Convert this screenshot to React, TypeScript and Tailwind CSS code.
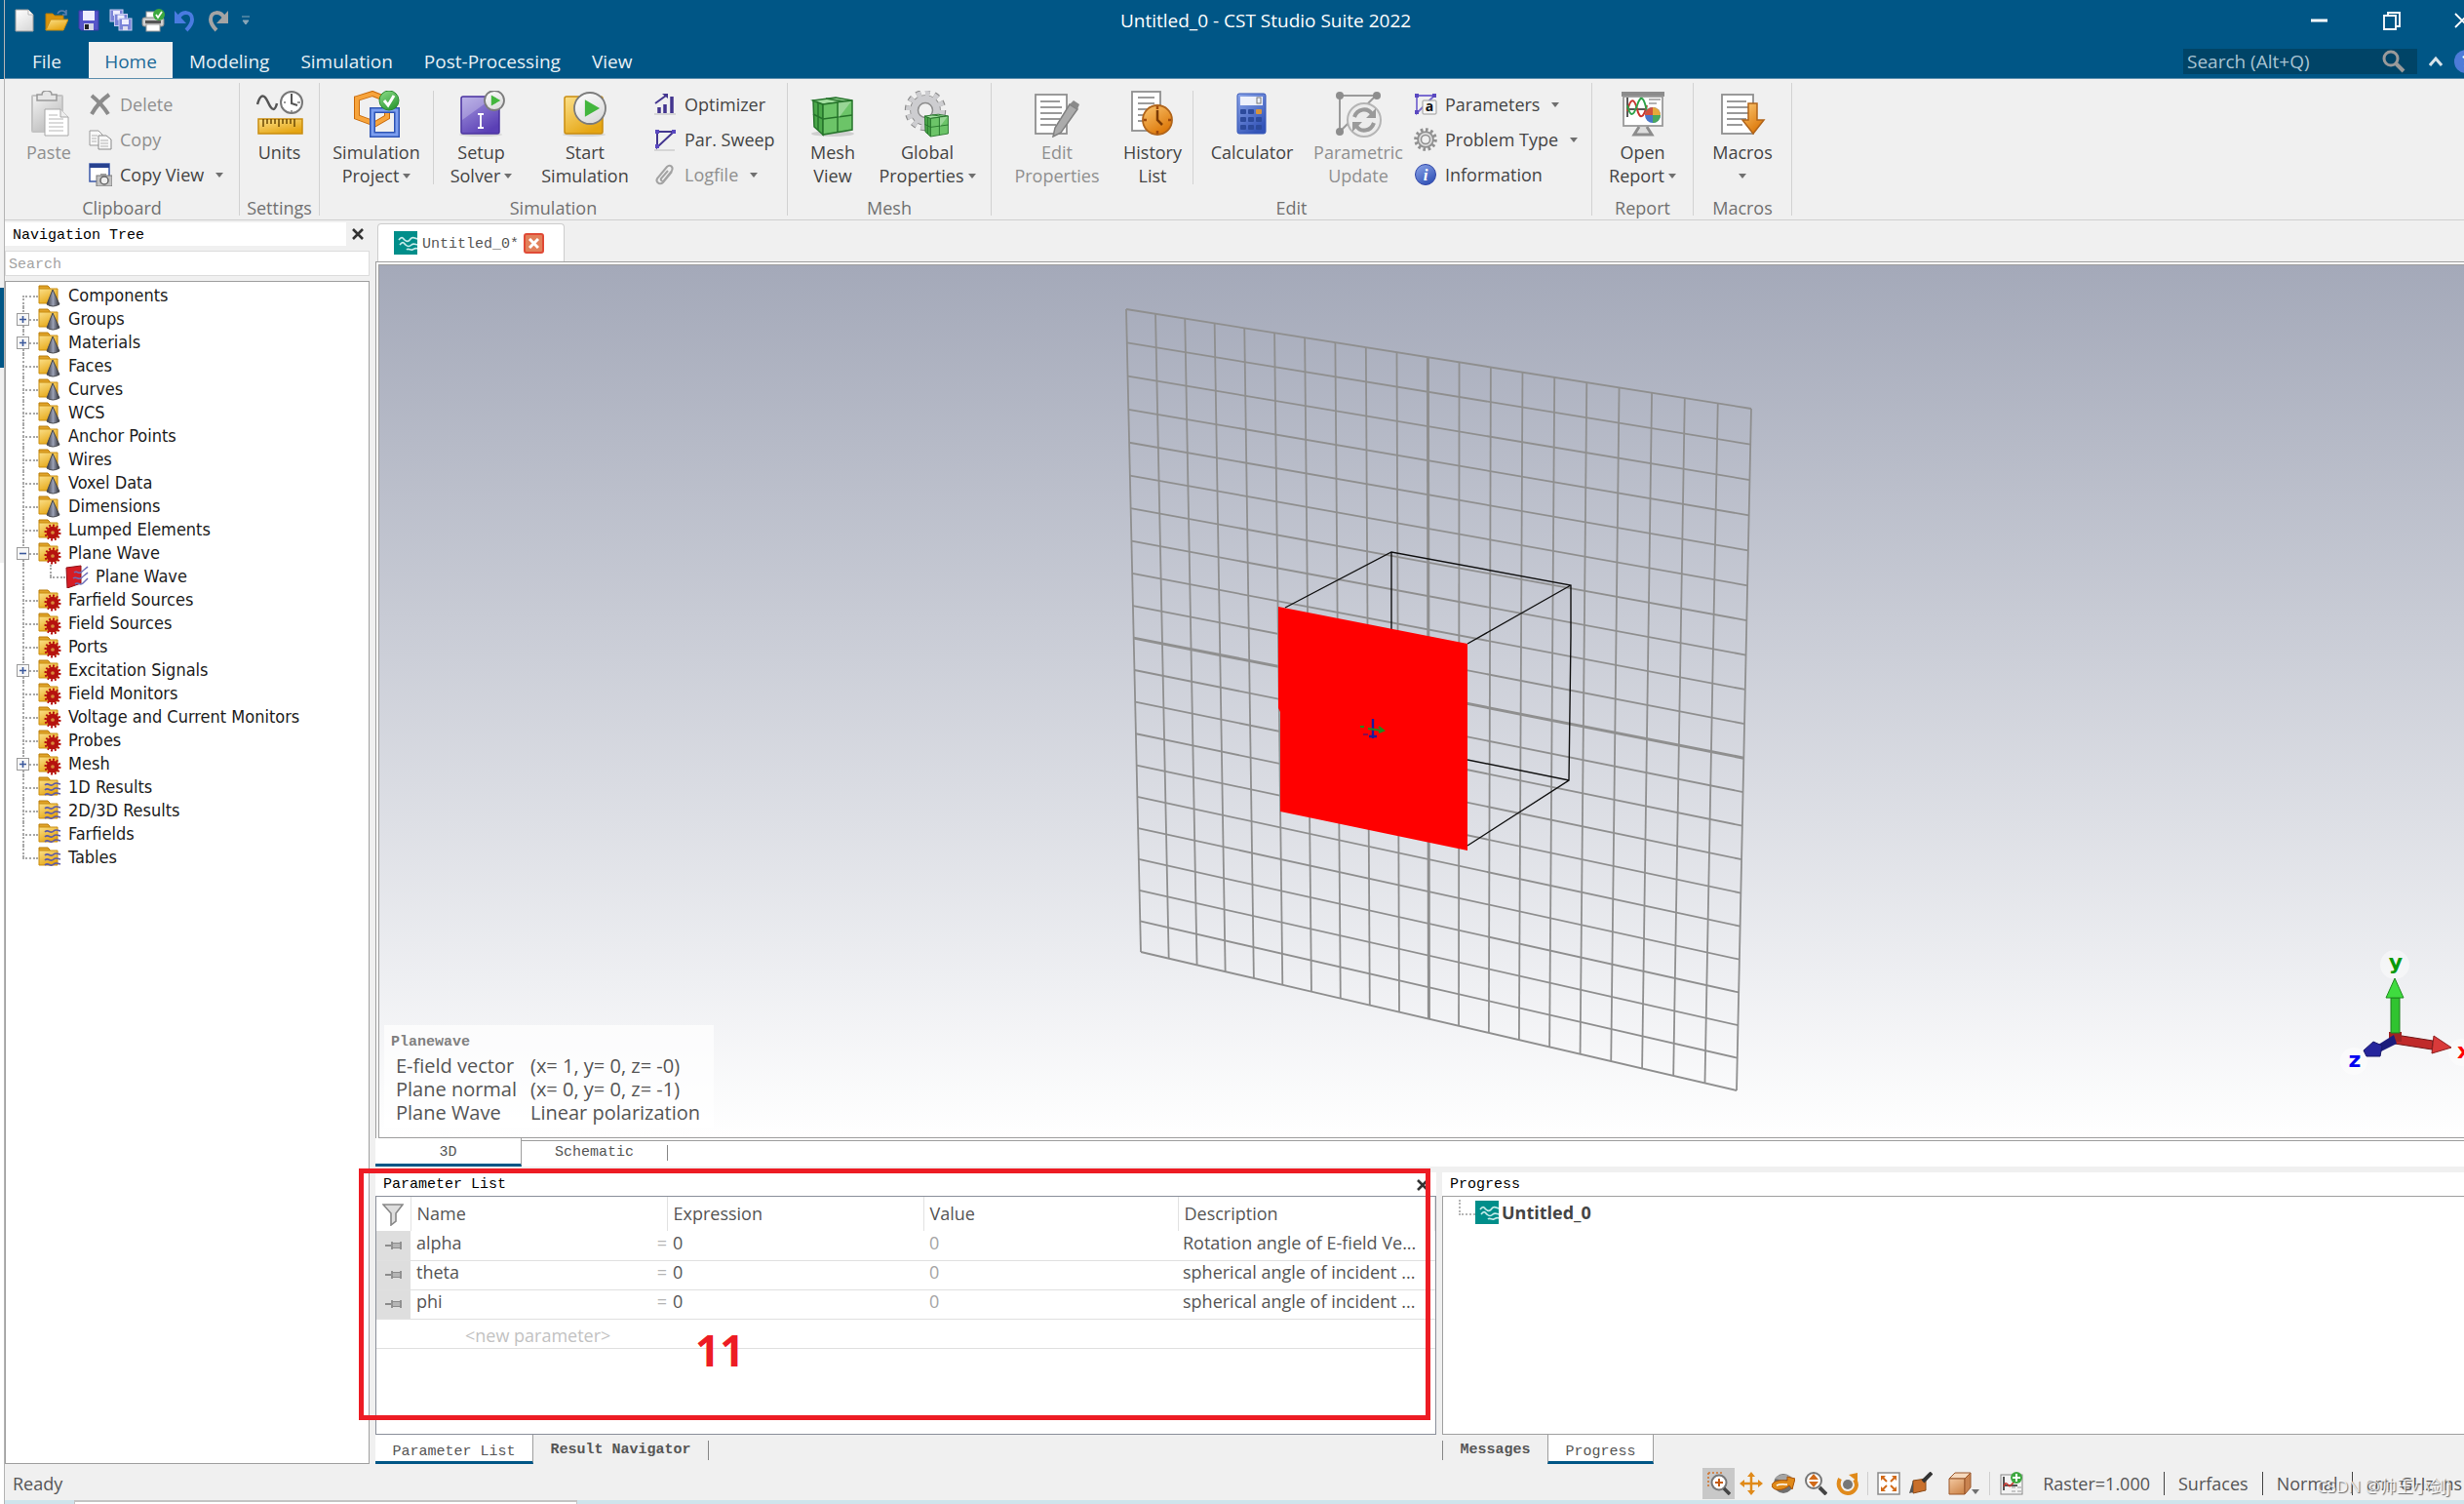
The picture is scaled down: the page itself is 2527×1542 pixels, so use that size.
import { Fragment, type ReactNode } from 'react'

interface IconProps {
  className?: string
  size?: number
  box?: number
  children?: ReactNode
}

const Svg = ({ className, size = 24, box = 24, children }: IconProps) => (
  <svg
    width={size}
    height={size}
    viewBox={`0 0 ${box} ${box}`}
    fill="none"
    className={`shrink-0 ${className ?? ''}`}
    aria-hidden="true"
  >
    {children}
  </svg>
)

/** Gradients shared by all icons */
const Gradients = () => {
  const stops: [string, string, string][] = [
    ['gGold', '#fbe08a', '#e5a512'],
    ['gGray', '#f2f2f2', '#bdbdbd'],
    ['gViolet', '#a79be0', '#5a3fb5'],
    ['gGreen', '#8fdf8a', '#2f9a35'],
    ['gBlue', '#8fa8ea', '#3354b8'],
    ['gOrange', '#fbc671', '#dc7708'],
    ['gPaper', '#ffffff', '#dcdcdc'],
    ['gCopper', '#f3c8a0', '#d08a50'],
  ]
  return (
    <svg width="0" height="0" className="absolute" aria-hidden="true">
      <defs>
        {stops.map(([id, from, to]) => (
          <linearGradient key={id} id={id} x1="0" y1="0" x2="0.6" y2="1">
            <stop offset="0" stopColor={from} />
            <stop offset="1" stopColor={to} />
          </linearGradient>
        ))}
        <linearGradient id="gCone" x1="0" y1="0" x2="1" y2="0">
          <stop offset="0" stopColor="#34363e" />
          <stop offset="0.5" stopColor="#9aa0b4" />
          <stop offset="1" stopColor="#2b2c32" />
        </linearGradient>
      </defs>
    </svg>
  )
}

const Caret = ({ className = '' }: { className?: string }) => (
  <svg width="8" height="6" viewBox="0 0 8 6" className={`shrink-0 ${className}`} aria-hidden="true">
    <path d="M0 1h8L4 6z" fill="#6f6f6f" />
  </svg>
)

/* ---------- Quick access icons ---------- */

const NewIcon = () => (
  <Svg>
    <path d="M3 1h13l5 5v17H3z" fill="url(#gPaper)" stroke="#9d9d9d" />
    <path d="M16 1v5h5" fill="#fff" stroke="#b5b5b5" />
  </Svg>
)

const OpenIcon = () => (
  <Svg>
    <path d="M1 22V5h7l2 2h9v4" fill="#d9940c" stroke="#b87a06" />
    <path d="M1 22 6 11h18l-5 11z" fill="url(#gGold)" stroke="#c98c0e" />
    <path d="M13 5c2-4 7-4 9 0M22 1v5h-4" stroke="#5b7fae" strokeWidth="1.5" />
  </Svg>
)

const SaveIcon = () => (
  <Svg>
    <path d="M2 2h20v20H4l-2-2z" fill="#5454c8" stroke="#3b3ba6" />
    <rect x="6" y="2" width="12" height="10" fill="#eef" />
    <rect x="7" y="15" width="10" height="7" fill="#d4d6e6" />
    <rect x="8" y="16" width="4" height="5" fill="#222" />
  </Svg>
)

const SaveAllIcon = () => (
  <Svg>
    {[0, 5, 10].map((o) => (
      <g key={o}>
        <rect x={1 + o * 0.9} y={1 + o * 0.9} width="13" height="12" fill="#7b84d8" stroke="#c9cef2" />
        <rect x={4 + o * 0.9} y={2 + o * 0.9} width="7" height="5" fill="#eef" />
      </g>
    ))}
    <rect x="14" y="18" width="5" height="4" fill="#dde" />
  </Svg>
)

const PrintIcon = () => (
  <Svg>
    <rect x="5" y="3" width="13" height="7" fill="#fff" stroke="#999" />
    <rect x="1" y="9" width="22" height="9" rx="2" fill="#cfcfcf" stroke="#8a8a8a" />
    <rect x="4" y="12" width="16" height="3" fill="#555" />
    <rect x="5" y="16" width="14" height="7" fill="#fff" stroke="#999" />
    <circle cx="18" cy="6" r="6" fill="#3da83f" />
    <path d="m15 6 2 3 4-6" stroke="#fff" strokeWidth="1.8" />
  </Svg>
)

const UndoIcon = ({ flip = false }: { flip?: boolean }) => (
  <Svg className={flip ? '-scale-x-100' : ''}>
    <path d="M5 10C8 2 19 2 19 11c0 5-3 8-6 11" stroke={flip ? '#a4a4a4' : '#4a7be0'} strokeWidth="4" />
    <path d="M1 2v13h12z" fill={flip ? '#a4a4a4' : '#4a7be0'} />
  </Svg>
)

/* ---------- Ribbon icons, 48 x 48 ---------- */

const Big = ({ children }: { children: ReactNode }) => (
  <Svg size={48} box={48}>
    {children}
  </Svg>
)

const PasteIcon = () => (
  <Big>
    <rect x="6" y="4" width="33" height="39" rx="2" fill="#c3c3c3" />
    <rect x="8" y="6" width="29" height="35" fill="url(#gGray)" />
    <path d="M12 4h5q0-4 5-4t5 4h5v6H12z" fill="#e6e6e6" stroke="#999" strokeWidth="1.5" />
    <path d="M20 19h16l8 8v19H20z" fill="#fff" stroke="#a6a6a6" />
    <path d="M36 19v8h8" fill="#eee" stroke="#a6a6a6" />
    <path d="M24 25h9M24 29h15M24 33h15M24 37h15M24 41h15" stroke="#cfcfcf" strokeWidth="1.5" />
  </Big>
)

const UnitsIcon = () => (
  <Big>
    <path d="M1 14C4 3 8 3 12 12s7 9 9 1" stroke="#555" strokeWidth="2.5" />
    <circle cx="36" cy="12" r="11" fill="#fff" stroke="#777" strokeWidth="2" />
    <path d="M36 3v10l6 2" stroke="#555" strokeWidth="2" />
    <path d="M28 12h2M42 12h3M36 20v2" stroke="#777" strokeWidth="1.5" />
    <rect x="2" y="29" width="45" height="15" fill="url(#gGold)" stroke="#c98c0e" strokeWidth="1.5" />
    <path
      d="M7 29v8M11 29v5M15 29v5M19 29v5M23 29v8M27 29v5M31 29v5M35 29v5M39 29v8"
      stroke="#6b4a05"
      strokeWidth="1.5"
    />
  </Big>
)

const SimProjectIcon = () => (
  <Big>
    <path d="M4 8 20 3l15 6v18L23 34 4 27z" stroke="#c96a0a" strokeWidth="6" />
    <path d="M4 8 20 3l15 6v18L23 34 4 27z" stroke="#f7a43c" strokeWidth="4" />
    <path d="M20 20h25v25H20z" stroke="#2f55b5" strokeWidth="6" />
    <path d="M20 20h25v25H20z" stroke="#7d9ff0" strokeWidth="3" />
    <circle cx="37" cy="10" r="10" fill="url(#gGreen)" stroke="#2b8a30" />
    <path d="m32 10 4 5 6-10" stroke="#fff" strokeWidth="3" />
  </Big>
)

const PlayBadge = ({ cx, cy, r }: { cx: number; cy: number; r: number }) => (
  <>
    <circle cx={cx} cy={cy} r={r} fill="url(#gPaper)" stroke="#7c7c7c" strokeWidth="1.8" />
    <path d={`M${cx - r * 0.32} ${cy - r * 0.55}v${r * 1.1}l${r * 0.95} ${-r * 0.55}z`} fill="#43b63d" />
  </>
)

const SetupIcon = () => (
  <Big>
    <ellipse cx="23" cy="45" rx="22" ry="2" fill="#d6d6d6" />
    <rect x="3" y="6" width="39" height="38" rx="2" fill="url(#gViolet)" stroke="#4b33a0" strokeWidth="1.5" />
    <path d="M4 30 36 7H4z" fill="#fff" opacity="0.25" />
    <path d="M20 24h6M23 24v14M20 38h6" stroke="#fff" strokeWidth="1.8" />
    <PlayBadge cx={37} cy={10} r={10} />
  </Big>
)

const StartIcon = () => (
  <Big>
    <ellipse cx="23" cy="45" rx="22" ry="2" fill="#d6d6d6" />
    <rect x="3" y="6" width="39" height="38" rx="2" fill="url(#gGold)" stroke="#c98c0e" strokeWidth="1.5" />
    <PlayBadge cx={29} cy={18} r={16} />
  </Big>
)

const meshCube = (
  <>
    <path d="M4 10 14 14v31L5 37z" fill="#4ba84a" stroke="#26742b" strokeWidth="1.5" />
    <path d="M4 10 27 7l17 3-30 4z" fill="#a3dfa0" stroke="#26742b" strokeWidth="1.5" />
    <path d="M14 14l30-4v30l-30 5z" fill="#6cc468" stroke="#26742b" strokeWidth="1.5" />
    <path d="M29 12v31M14 29l30-4M4 24l10 5M17 8l18 3M9 12v28" stroke="#26742b" strokeWidth="1.5" />
    <path d="M30 12v16l13-17z" fill="#fff" opacity="0.3" />
  </>
)

const MeshIcon = () => (
  <Big>
    <ellipse cx="24" cy="44" rx="22" ry="3" fill="#cfcfcf" />
    {meshCube}
  </Big>
)

interface GearProps {
  cx: number
  cy: number
  r: number
  fill: string
  hole: string
}

const Gear = ({ cx, cy, r, fill, hole }: GearProps) => (
  <>
    <circle cx={cx} cy={cy} r={r} stroke={fill} strokeWidth={r * 0.36} pathLength={24} strokeDasharray="1 1" />
    <circle cx={cx} cy={cy} r={r * 0.88} fill={fill} />
    <circle cx={cx} cy={cy} r={r * 0.26} fill={hole} />
  </>
)

const GlobalIcon = () => (
  <Big>
    <Gear cx={22} cy={20} r={18} fill="#8c8c8c" hole="#8c8c8c" />
    <Gear cx={22} cy={20} r={17} fill="#cdcdd0" hole="#f0f0f0" />
    <circle cx="22" cy="20" r="7.5" fill="#f0f0f0" stroke="#8c8c8c" strokeWidth="1.5" />
    <g transform="translate(19 20) scale(0.6)">{meshCube}</g>
  </Big>
)

const Sheet = ({ x = 4 }: { x?: number }) => (
  <>
    <rect x={x} y="4" width="32" height="40" fill="#fff" stroke="#8f8f8f" strokeWidth="1.8" />
    <path
      d={`M${x + 5} 11h20M${x + 5} 17h22M${x + 5} 23h22M${x + 5} 29h20M${x + 5} 35h16`}
      stroke="#9a9a9a"
      strokeWidth="1.8"
    />
  </>
)

const EditIcon = () => (
  <Big>
    <Sheet x={2} />
    <path d="m37 14 8 5-17 24-8 4 2-9z" fill="#ababab" stroke="#808080" strokeWidth="1.5" />
    <path d="m37 14 8 5 2-5-6-4z" fill="#8a8a8a" />
  </Big>
)

const HistoryIcon = () => (
  <Big>
    <rect x="3" y="1" width="29" height="40" fill="#fff" stroke="#8f8f8f" strokeWidth="1.8" />
    <path d="M9 7h17M9 13h17M9 19h10M9 25h6M9 31h6" stroke="#7c7c7c" strokeWidth="1.5" />
    <circle cx="29" cy="30" r="15" fill="url(#gOrange)" stroke="#b0641a" strokeWidth="1.8" />
    <path d="M29 20v10l5 5" stroke="#7a3a05" strokeWidth="2.5" />
    <path d="M29 16v3M29 41v3M15 30h3M40 30h3" stroke="#a0490a" strokeWidth="2.5" />
  </Big>
)

const CalculatorIcon = () => (
  <Big>
    <rect x="9" y="3" width="29" height="41" rx="2" fill="url(#gBlue)" stroke="#3354b8" />
    <rect x="12" y="6" width="23" height="9" fill="#eef1fb" />
    <rect x="29" y="7" width="4" height="6" stroke="#777" />
    {[19, 27, 35].map((y) =>
      [12, 20, 28].map((x) => (
        <rect
          key={`${x}-${y}`}
          x={x}
          y={y}
          width="6"
          height="5"
          rx="1"
          fill={x === 28 && y === 19 ? '#d8943a' : '#2c4a9c'}
        />
      ))
    )}
  </Big>
)

const ParametricIcon = () => (
  <Big>
    <path d="M5 5h37M5 5v37M42 5 5 42" stroke="#9a9a9a" strokeWidth="2" />
    <circle cx="5" cy="5" r="4" fill="#8d8d8d" />
    <circle cx="43" cy="5" r="4" fill="#8d8d8d" />
    <circle cx="5" cy="42" r="4" fill="#8d8d8d" />
    <circle cx="30" cy="30" r="17" fill="#ececec" stroke="#b5b5b5" strokeWidth="2" />
    <path d="M20 27c3-9 14-10 18-3M40 33c-3 9-14 10-18 3" stroke="#9a9a9a" strokeWidth="4" />
    <path d="M42 18v10H32zM18 42V32h10z" fill="#9a9a9a" />
  </Big>
)

const ReportIcon = () => (
  <Big>
    <rect x="2" y="1" width="44" height="5" fill="#8c8c8c" />
    <rect x="4" y="6" width="40" height="30" fill="#fff" stroke="#9a9a9a" strokeWidth="1.8" />
    <path d="M8 7v20M8 19h20" stroke="#222" strokeWidth="1.5" />
    <path d="M8 21c3-14 7-14 10-2s7 8 10-4" stroke="#c8352e" strokeWidth="2" />
    <path d="M8 15c3 12 6 12 10 0s7-8 10 6" stroke="#2fa24a" strokeWidth="2" />
    <path d="M30 9h12M30 13h8" stroke="#999" strokeWidth="1.5" />
    <circle cx="34" cy="25" r="8" fill="#4a76c9" />
    <path d="M34 25v-8a8 8 0 0 1 8 8z" fill="#e7a93a" />
    <path d="M34 25h8a8 8 0 0 1-8 8z" fill="#4aa85c" />
    <path d="M34 25h-8a8 8 0 0 1 8-8z" fill="#d1513f" />
    <path d="m20 37-5 8h18l-5-8" stroke="#8c8c8c" strokeWidth="3" fill="#ddd" />
  </Big>
)

const MacrosIcon = () => (
  <Big>
    <Sheet x={3} />
    <path d="M30 13h9v17h7L35 44 24 30h6z" fill="url(#gOrange)" stroke="#b0641a" strokeWidth="1.5" />
  </Big>
)

/* ---------- Ribbon icons, 24 x 24 ---------- */

const DeleteIcon = () => (
  <Svg>
    <path d="M3 3c6 5 12 11 17 19M21 2C14 7 8 13 3 22" stroke="#8b8b8b" strokeWidth="4" />
  </Svg>
)

const CopyIcon = () => (
  <Svg>
    <path d="M1 3h9l4 4v11H1z" fill="#f8f8f8" stroke="#9a9a9a" />
    <path d="M10 8h8l5 4v10H10z" fill="#f8f8f8" stroke="#8a8a8a" />
    <path d="M3 8h6M3 11h5M3 14h5M12 13h8M12 16h8M12 19h8" stroke="#b3b3b3" />
  </Svg>
)

const CopyViewIcon = () => (
  <Svg>
    <rect x="1" y="1" width="20" height="18" fill="#fff" stroke="#3a57a8" strokeWidth="1.5" />
    <rect x="1" y="1" width="20" height="4" fill="#27418f" />
    <rect x="8" y="13" width="16" height="11" fill="#c2c2c2" stroke="#777" />
    <rect x="12" y="11" width="6" height="3" fill="#9c9c9c" />
    <circle cx="16" cy="18" r="4" fill="#eee" stroke="#666" strokeWidth="1.5" />
  </Svg>
)

const OptimizerIcon = () => (
  <Svg>
    <path d="M1 22h22" stroke="#bbb" />
    <path d="M6 15v6M12 12v9M19 4v17" stroke="#43358f" strokeWidth="3.5" />
    <path d="M2 11 13 3" stroke="#43358f" strokeWidth="2" />
    <path d="M9 1h6v5z" fill="#43358f" />
  </Svg>
)

const SweepIcon = () => (
  <Svg>
    <path d="M1 23h21" stroke="#bbb" />
    <path d="M4 4h17M4 4v16L21 4" stroke="#43358f" strokeWidth="2" />
    <path d="M2 2h4v4H2zM19 2h4v4h-4zM2 17h4v4H2z" fill="#5a48c0" />
  </Svg>
)

const ClipIcon = () => (
  <Svg>
    <path
      d="m19 9-9 11c-3 3-8 0-6-4L14 4c3-3 7 0 5 4l-8 10c-1 2-4 0-3-2l7-8"
      stroke="#a3a3a3"
      strokeWidth="2"
    />
  </Svg>
)

const ParametersIcon = () => (
  <Svg>
    <path d="M3 3h18M3 3v18L21 3" stroke="#7a6bd0" strokeWidth="1.8" />
    <path d="M1 1h4v4H1zM19 1h4v4h-4zM1 18h4v4H1z" fill="#5a48c0" />
    <rect x="9" y="8" width="14" height="14" rx="1" fill="#f6f6f6" stroke="#999" />
    <text x="16" y="19" fontSize="14" fontWeight="700" fontFamily="Open Sans, sans-serif" textAnchor="middle" fill="#111">
      a
    </text>
  </Svg>
)

const ProblemIcon = () => (
  <Svg>
    <Gear cx={12} cy={12} r={10} fill="#8f8f8f" hole="#8f8f8f" />
    <circle cx="12" cy="12" r="7" fill="#dcdcdc" />
    <circle cx="12" cy="12" r="4.5" fill="#f0f0f0" stroke="#8f8f8f" strokeWidth="1.5" />
  </Svg>
)

const InfoIcon = () => (
  <Svg>
    <circle cx="12" cy="12" r="10.5" fill="url(#gBlue)" stroke="#3348a8" />
    <text
      x="12"
      y="18"
      fontSize="17"
      fontStyle="italic"
      fontWeight="700"
      fontFamily="Liberation Serif, serif"
      textAnchor="middle"
      fill="#fff"
    >
      i
    </text>
  </Svg>
)

/* ---------- Ribbon building blocks ---------- */

interface BigButtonProps {
  icon: ReactNode
  lines: [string, string?]
  width: string
  menu?: boolean
  disabled?: boolean
}

const BigButton = ({ icon, lines, width, menu, disabled }: BigButtonProps) => (
  <button
    type="button"
    disabled={disabled}
    className={`flex flex-col items-center pt-1 whitespace-nowrap leading-6 ${width} ${disabled ? 'text-[#8f8f8f]' : 'text-[#444]'}`}
  >
    {icon}
    <span className="mt-[3px]">{lines[0]}</span>
    <span className="flex h-6 items-center gap-1">
      {lines[1]}
      {menu && <Caret />}
    </span>
  </button>
)

interface SmallButtonProps {
  icon: ReactNode
  label: string
  menu?: boolean
  disabled?: boolean
}

const SmallButton = ({ icon, label, menu, disabled }: SmallButtonProps) => (
  <button
    type="button"
    disabled={disabled}
    className={`flex h-9 items-center gap-2 whitespace-nowrap ${disabled ? 'text-[#8f8f8f]' : 'text-[#444]'}`}
  >
    {icon}
    {label}
    {menu && <Caret className="ml-1" />}
  </button>
)

const RibbonGroup = ({ label, width, children }: { label: string; width: string; children: ReactNode }) => (
  <section aria-label={label} className={`my-1 flex shrink-0 flex-col border-r border-[#d2d2d2] ${width}`}>
    <div className="flex flex-1 pt-1">{children}</div>
    <div className="h-4 text-center leading-4 text-[#707070]">{label}</div>
  </section>
)

const Divider = ({ className = '' }: { className?: string }) => (
  <div className={`mt-1 mb-4 w-px bg-[#d2d2d2] ${className}`} />
)

const Ribbon = () => (
  <div className="flex h-[145px] shrink-0 overflow-hidden border-b border-[#cfcfcf] bg-[#f0f0f0]">
    <RibbonGroup label="Clipboard" width="w-[241px]">
      <BigButton icon={<PasteIcon />} lines={['Paste']} width="w-[86px] pl-1" disabled />
      <div className="flex flex-col">
        <SmallButton icon={<DeleteIcon />} label="Delete" disabled />
        <SmallButton icon={<CopyIcon />} label="Copy" disabled />
        <SmallButton icon={<CopyViewIcon />} label="Copy View" menu />
      </div>
    </RibbonGroup>
    <RibbonGroup label="Settings" width="w-[82px]">
      <BigButton icon={<UnitsIcon />} lines={['Units']} width="w-full" />
    </RibbonGroup>
    <RibbonGroup label="Simulation" width="w-[480px]">
      <BigButton icon={<SimProjectIcon />} lines={['Simulation', 'Project']} width="w-[116px]" menu />
      <Divider />
      <BigButton icon={<SetupIcon />} lines={['Setup', 'Solver']} width="w-[97px]" menu />
      <BigButton icon={<StartIcon />} lines={['Start', 'Simulation']} width="w-[116px]" />
      <div className="flex flex-col pl-3">
        <SmallButton icon={<OptimizerIcon />} label="Optimizer" />
        <SmallButton icon={<SweepIcon />} label="Par. Sweep" />
        <SmallButton icon={<ClipIcon />} label="Logfile" menu disabled />
      </div>
    </RibbonGroup>
    <RibbonGroup label="Mesh" width="w-[209px]">
      <BigButton icon={<MeshIcon />} lines={['Mesh', 'View']} width="w-[92px]" />
      <BigButton icon={<GlobalIcon />} lines={['Global', 'Properties']} width="w-[102px]" menu />
    </RibbonGroup>
    <RibbonGroup label="Edit" width="w-[616px]">
      <BigButton icon={<EditIcon />} lines={['Edit', 'Properties']} width="w-[134px]" disabled />
      <BigButton icon={<HistoryIcon />} lines={['History', 'List']} width="w-[62px]" />
      <Divider className="ml-[10px]" />
      <BigButton icon={<CalculatorIcon />} lines={['Calculator']} width="w-[120px]" />
      <BigButton icon={<ParametricIcon />} lines={['Parametric', 'Update']} width="w-[98px]" disabled />
      <div className="flex flex-col pl-2">
        <SmallButton icon={<ParametersIcon />} label="Parameters" menu />
        <SmallButton icon={<ProblemIcon />} label="Problem Type" menu />
        <SmallButton icon={<InfoIcon />} label="Information" />
      </div>
    </RibbonGroup>
    <RibbonGroup label="Report" width="w-[104px]">
      <BigButton icon={<ReportIcon />} lines={['Open', 'Report']} width="w-full" menu />
    </RibbonGroup>
    <RibbonGroup label="Macros" width="w-[101px]">
      <BigButton icon={<MacrosIcon />} lines={['Macros']} width="w-full" menu />
    </RibbonGroup>
  </div>
)

/* ---------- Title bar ---------- */

const quickActions: [string, ReactNode][] = [
  ['New', <NewIcon />],
  ['Open', <OpenIcon />],
  ['Save', <SaveIcon />],
  ['Save all', <SaveAllIcon />],
  ['Print', <PrintIcon />],
  ['Undo', <UndoIcon />],
  ['Redo', <UndoIcon flip />],
]

const menuTabs = ['Modeling', 'Simulation', 'Post-Processing', 'View']

const TitleBar = () => (
  <header className="shrink-0 overflow-hidden border-b border-[#5e8fae] bg-[#005686] text-[19px] text-[#e8f0f5]">
    <div className="-mr-[64px] flex h-[42px] items-center">
      <div className="flex flex-1 items-center gap-[9px]">
        {quickActions.map(([label, icon]) => (
          <button key={label} type="button" aria-label={label} className="first:ml-2">
            {icon}
          </button>
        ))}
        <button type="button" aria-label="Customize" className="ml-1">
          <svg width="8" height="10" viewBox="0 0 8 10" aria-hidden="true">
            <path d="M0 1h8M1 5h6L4 9z" fill="#8ba7b8" stroke="#8ba7b8" />
          </svg>
        </button>
      </div>
      <h1 className="text-white">Untitled_0 - CST Studio Suite 2022</h1>
      <div className="flex flex-1 items-center justify-end gap-[51px]">
        <button type="button" aria-label="Minimize">
          <Svg>
            <path d="M3 12h17" stroke="#fff" strokeWidth="3" />
          </Svg>
        </button>
        <button type="button" aria-label="Restore">
          <Svg>
            <path d="M3 7h12v14H3zM7 7V4h12v14h-4" stroke="#fff" strokeWidth="1.8" />
          </Svg>
        </button>
        <button type="button" aria-label="Close" className="mr-[50px]">
          <Svg>
            <path d="m1 5 14 14M15 5 1 19" stroke="#fff" strokeWidth="1.8" />
          </Svg>
        </button>
      </div>
    </div>
    <div className="flex h-[38px] items-stretch">
      <button type="button" className="w-[86px] pt-[5px]">
        File
      </button>
      <button type="button" className="mt-px mr-px w-[86px] bg-[#f0f0f0] pt-1 text-[#1c6a98]">
        Home
      </button>
      {menuTabs.map((tab) => (
        <button key={tab} type="button" className="px-4 pt-[5px]">
          {tab}
        </button>
      ))}
      <div className="-mr-[14px] ml-auto flex items-center pt-1">
        <label className="flex h-[26px] w-60 items-center bg-[#004467] pr-3 pl-1">
          <input
            type="text"
            aria-label="Search commands"
            placeholder="Search (Alt+Q)"
            className="w-full min-w-0 bg-transparent outline-none placeholder:text-[#a9c3d2]"
          />
          <Svg>
            <circle cx="9" cy="9" r="7" stroke="#9a9a9a" strokeWidth="3" />
            <path d="m14 14 8 8" stroke="#9a9a9a" strokeWidth="4" />
          </Svg>
        </label>
        <button type="button" aria-label="Collapse ribbon" className="mx-3">
          <svg width="14" height="12" viewBox="0 0 14 12" fill="none" aria-hidden="true">
            <path d="m1 10 6-7 6 7" stroke="#d9e4ea" strokeWidth="3" />
          </svg>
        </button>
        <button
          type="button"
          aria-label="Help"
          className="size-6 rounded-full bg-[#4d7bd8] text-base leading-6 font-bold text-white"
        >
          ?
        </button>
      </div>
    </div>
  </header>
)

/* ---------- Navigation tree ---------- */

type FolderKind = 'cone' | 'gear' | 'wave' | 'plane'

const Folder = ({ kind }: { kind: FolderKind }) => {
  if (kind === 'plane') {
    return (
      <Svg>
        <path d="M1 3 16 1v18L2 24z" fill="#d51c24" stroke="#8e1016" />
        <path
          d="M9 8c4-3 4 3 8-1 2-2 4-3 6-5M8 14c4-3 5 3 9-1 2-2 4-3 6-5M10 20c3-3 5 2 8-1 2-2 3-3 5-5"
          stroke="#6d6fb8"
          strokeWidth="1.5"
        />
      </Svg>
    )
  }
  return (
    <Svg>
      <path d="M1 5V2h9l2 2v2" fill="#e0a32a" stroke="#b97c08" />
      <path d="M1 5h19v15H1z" fill="url(#gGold)" stroke="#c98c0e" />
      {kind === 'cone' && <path d="m15 6 7 15q-7 4-13 0z" fill="url(#gCone)" stroke="#44464d" />}
      {kind === 'gear' && <Gear cx={15} cy={15} r={7.2} fill="#b5120f" hole="#d98a3a" />}
      {kind === 'wave' && (
        <path
          d="M7 10c4-4 5 3 9-1 2-2 4-1 7 0M7 15c4-4 5 3 9-1 2-2 4-1 7 0M7 20c4-4 5 3 9-1 2-2 4-1 7 0"
          stroke="#5c5aa8"
          strokeWidth="1.7"
        />
      )}
    </Svg>
  )
}

interface TreeNode {
  label: string
  kind: FolderKind
  toggle?: '+' | '-'
  children?: TreeNode[]
}

const tree: TreeNode[] = [
  { label: 'Components', kind: 'cone' },
  { label: 'Groups', kind: 'cone', toggle: '+' },
  { label: 'Materials', kind: 'cone', toggle: '+' },
  { label: 'Faces', kind: 'cone' },
  { label: 'Curves', kind: 'cone' },
  { label: 'WCS', kind: 'cone' },
  { label: 'Anchor Points', kind: 'cone' },
  { label: 'Wires', kind: 'cone' },
  { label: 'Voxel Data', kind: 'cone' },
  { label: 'Dimensions', kind: 'cone' },
  { label: 'Lumped Elements', kind: 'gear' },
  { label: 'Plane Wave', kind: 'gear', toggle: '-', children: [{ label: 'Plane Wave', kind: 'plane' }] },
  { label: 'Farfield Sources', kind: 'gear' },
  { label: 'Field Sources', kind: 'gear' },
  { label: 'Ports', kind: 'gear' },
  { label: 'Excitation Signals', kind: 'gear', toggle: '+' },
  { label: 'Field Monitors', kind: 'gear' },
  { label: 'Voltage and Current Monitors', kind: 'gear' },
  { label: 'Probes', kind: 'gear' },
  { label: 'Mesh', kind: 'gear', toggle: '+' },
  { label: '1D Results', kind: 'wave' },
  { label: '2D/3D Results', kind: 'wave' },
  { label: 'Farfields', kind: 'wave' },
  { label: 'Tables', kind: 'wave' },
]

interface GuideProps {
  first?: boolean
  last?: boolean
  toggle?: string
  label: string
}

const Guide = ({ first, last, toggle, label }: GuideProps) => (
  <span className="relative h-6 w-4 shrink-0">
    <span
      className={`absolute left-0 border-l-2 border-dotted border-[#a8a8a8] ${first ? 'top-3' : 'top-0'} ${last ? 'h-3' : 'bottom-0'}`}
    />
    <span className="absolute top-3 right-0 left-0 border-t-2 border-dotted border-[#a8a8a8]" />
    {toggle && (
      <button
        type="button"
        aria-label={`Toggle ${label}`}
        className="absolute top-[6px] -left-[6px] size-[13px] border border-[#9a9a9a] bg-[#f7f7f7]"
      >
        <svg width="11" height="11" viewBox="0 0 11 11" aria-hidden="true">
          <path d={toggle === '+' ? 'M2 5.5h7M5.5 2v7' : 'M2 5.5h7'} stroke="#3c5a9c" strokeWidth="1.6" />
        </svg>
      </button>
    )}
  </span>
)

const CrossIcon = () => (
  <svg width="12" height="12" viewBox="0 0 12 12" aria-hidden="true">
    <path d="m1 1 10 10M11 1 1 11" stroke="#333" strokeWidth="2.6" />
  </svg>
)

const NavigationTree = () => (
  <aside className="flex w-[374px] shrink-0 flex-col">
    <div className="flex h-6 items-center bg-white pl-2 font-['Liberation_Mono',monospace] text-[15px] text-black">
      <span className="flex-1 pt-1">Navigation Tree</span>
      <button
        type="button"
        aria-label="Close navigation tree"
        className="flex h-6 w-6 items-center justify-center bg-[#f0f0f0]"
      >
        <CrossIcon />
      </button>
    </div>
    <input
      type="search"
      aria-label="Search tree"
      placeholder="Search"
      className="mt-[5px] h-[26px] border border-[#dcdcdc] bg-white pt-[2px] pl-[3px] font-['Liberation_Mono',monospace] text-[15px] outline-none placeholder:text-[#a3a3a3]"
    />
    <ul className="mt-[5px] flex-1 border border-[#a0a0a0] bg-white pt-[2px] pl-[17px] font-['DejaVu_Sans_Condensed','DejaVu_Sans',sans-serif] text-[18px] text-[#1c1c1c]">
      {tree.map((node, i) => (
        <li key={node.label}>
          <div className="flex h-6 items-center">
            <Guide first={i === 0} last={i === tree.length - 1} toggle={node.toggle} label={node.label} />
            <Folder kind={node.kind} />
            <span className="ml-[7px] leading-6 whitespace-nowrap">{node.label}</span>
          </div>
          {node.children && (
            <ul className="border-l-2 border-dotted border-[#a8a8a8] pl-[26px]">
              {node.children.map((child) => (
                <li key={child.label} className="flex h-6 items-center">
                  <Guide last label={child.label} />
                  <Folder kind={child.kind} />
                  <span className="ml-[7px] leading-6 whitespace-nowrap">{child.label}</span>
                </li>
              ))}
            </ul>
          )}
        </li>
      ))}
    </ul>
  </aside>
)

const CstLogo = () => (
  <svg width="24" height="24" viewBox="0 0 24 24" fill="none" className="shrink-0" aria-hidden="true">
    <rect width="24" height="24" fill="#008e8a" />
    <path
      d="M5 9c3-4 4-2 6 0s4 2 6-1 4-1 7 0M6 14c3-4 4-2 6 0s4 2 6 0 3-1 6 0M13 19c2-2 4 1 6 0s3-2 5-1"
      stroke="#c9eceb"
      strokeWidth="1.7"
    />
  </svg>
)

/* ---------- 3D view ---------- */

type Point = [number, number]

const corners: [Point, Point, Point, Point] = [
  [765, 45],
  [1406, 147],
  [1391, 846],
  [780, 704],
]

// Maps the unit square onto the four corners with perspective.
function project(u: number, v: number): Point {
  const [[x0, y0], [x1, y1], [x2, y2], [x3, y3]] = corners
  const dx1 = x1 - x2
  const dx2 = x3 - x2
  const dx3 = x0 - x1 + x2 - x3
  const dy1 = y1 - y2
  const dy2 = y3 - y2
  const dy3 = y0 - y1 + y2 - y3
  const det = dx1 * dy2 - dx2 * dy1
  const g = (dx3 * dy2 - dx2 * dy3) / det
  const h = (dx1 * dy3 - dx3 * dy1) / det
  const w = g * u + h * v + 1
  return [
    ((x1 - x0 + g * x1) * u + (x3 - x0 + h * x3) * v + x0) / w,
    ((y1 - y0 + g * y1) * u + (y3 - y0 + h * y3) * v + y0) / w,
  ]
}

const steps = Array.from({ length: 21 }, (_, i) => i)

const GridLine = ({ from, to, bold }: { from: Point; to: Point; bold: boolean }) => (
  <line x1={from[0]} y1={from[1]} x2={to[0]} y2={to[1]} strokeWidth={bold ? 3 : 1.8} />
)

const Scene = () => (
  <svg
    viewBox="0 0 2136 894"
    preserveAspectRatio="xMidYMid meet"
    className="absolute inset-0 h-full w-full"
    role="img"
    aria-label="3D model"
  >
    <g stroke="#8f8f8f">
      {steps.map((i) => (
        <Fragment key={i}>
          <GridLine from={project(i / 20, 0)} to={project(i / 20, 1)} bold={i === 10} />
          <GridLine from={project(0, i / 20)} to={project(1, i / 20)} bold={i === 10} />
        </Fragment>
      ))}
    </g>
    <path
      d="M928 351 1037 294l184 34v52l-2 148-104 67M1115 388l106-60M1037 294v82M1115 507l104 21"
      fill="none"
      stroke="#111"
      strokeWidth="1.4"
    />
    <path d="M921 350 1115 388v212L923 560V458l-2-4z" fill="#f00" />
    <path d="M1018 465v20M1014 483h8" stroke="#1a1a9c" strokeWidth="2.4" />
    <path d="M1005 473h4M1013 475l14 2M1024 473l5 4-5 2" stroke="#1f8a1f" strokeWidth="2" fill="none" />
    <path d="M1008 481h5" stroke="#1a1a9c" />
  </svg>
)

const AxisTriad = () => (
  <svg width="136" height="140" viewBox="0 0 136 140" className="absolute right-0 bottom-[59px]" aria-hidden="true">
    <g fill="#fff" opacity="0.45">
      <circle cx="65" cy="22" r="15" />
      <circle cx="23" cy="121" r="14" />
      <circle cx="134" cy="112" r="14" />
    </g>
    <path d="m66 94 38 6-1 9-38-6z" fill="#c02a2a" stroke="#701818" />
    <path d="m105 95 18 12-20 6z" fill="#d93a3a" stroke="#8c1d1d" />
    <path d="M59 91h13v10H59z" fill="#a02424" />
    <path d="m64 94 3 9-18 9-4-6z" fill="#1c1c7c" />
    <path d="m43 101 9 4-2 11H36l-3-6z" fill="#25259c" stroke="#18186a" />
    <path d="M61 56h9v36h-9z" fill="#30c430" stroke="#1f7d1f" />
    <path d="m65 36 9 20H56z" fill="#3fdc3f" stroke="#1f8a1f" />
    <g fontFamily="DejaVu Sans, sans-serif" fontSize="22" fontWeight="700" textAnchor="middle">
      <text x="66" y="27" fill="#0a9a0a">
        y
      </text>
      <text x="24" y="127" fill="#0000f0">
        z
      </text>
      <text x="136" y="118" fill="#f00">
        x
      </text>
    </g>
  </svg>
)

const planewave = [
  ['E-field vector', '(x= 1, y= 0, z= -0)'],
  ['Plane normal', '(x= 0, y= 0, z= -1)'],
  ['Plane Wave', 'Linear polarization'],
]

const Viewport = () => (
  <main className="flex min-h-0 flex-1 flex-col">
    <div className="flex h-10 items-end pl-[2px]">
      <div className="flex h-[39px] w-[192px] items-center gap-[5px] rounded-t border border-b-0 border-[#cdcdcd] bg-white pl-4 font-['Liberation_Mono',monospace] text-[15px] text-[#555]">
        <CstLogo />
        <span className="pt-1">Untitled_0*</span>
        <button
          type="button"
          aria-label="Close document"
          className="flex size-[21px] items-center justify-center rounded-[3px] border-2 border-[#e04a36] bg-[#e2805a]"
        >
          <svg width="11" height="11" viewBox="0 0 11 11" aria-hidden="true">
            <path d="m1 1 9 9M10 1 1 10" stroke="#fff" strokeWidth="3" />
          </svg>
        </button>
      </div>
    </div>
    <div className="flex flex-1 border border-r-0 border-[#9d9d9d] bg-white pt-[2px] pb-[2px] pl-[2px]">
      <div className="relative flex-1 overflow-hidden border border-r-0 border-[#9d9d9d] bg-linear-to-b from-[#a4a9b9] to-[#ffffff]">
        <Scene />
        <AxisTriad />
        <div className="absolute bottom-[10px] left-[5px] w-[338px] bg-white/70 pt-[6px] pr-1 pb-[3px] pl-[7px]">
          <h2 className="font-['Liberation_Mono',monospace] text-[15px] leading-6 font-bold text-[#808080]">
            Planewave
          </h2>
          <dl className="grid grid-cols-[138px_1fr] pl-[5px] text-[20px] leading-6 text-[#555]">
            {planewave.map(([name, value]) => (
              <Fragment key={name}>
                <dt>{name}</dt>
                <dd className="whitespace-nowrap">{value}</dd>
              </Fragment>
            ))}
          </dl>
        </div>
      </div>
    </div>
    <div className="flex h-[26px] items-end bg-white font-['Liberation_Mono',monospace] text-[15px] leading-5 text-[#555]">
      <button
        type="button"
        className="relative h-[29px] w-[150px] border-r border-b-3 border-r-[#9d9d9d] border-b-[#005686] bg-white pt-1"
      >
        3D
      </button>
      <button type="button" className="h-6 w-[149px] pb-1">
        Schematic
      </button>
      <span className="mb-[6px] h-4 w-px bg-[#888]" />
    </div>
  </main>
)

/* ---------- Docked panels ---------- */

const parameters = [
  ['alpha', '0', '0', 'Rotation angle of E-field Ve...'],
  ['theta', '0', '0', 'spherical angle of incident ...'],
  ['phi', '0', '0', 'spherical angle of incident ...'],
]

const PinIcon = () => (
  <svg width="18" height="10" viewBox="0 0 18 10" aria-hidden="true" className="mx-auto">
    <path d="M0 5h6M7 1v8M16 1v8M7 3h9M7 7h9" stroke="#8c8c8c" strokeWidth="1.8" />
    <path d="M8 3h7v4H8z" fill="#b5b5b5" />
  </svg>
)

const PanelTitle = ({ children }: { children: ReactNode }) => (
  <div className="flex h-6 items-center justify-between bg-white px-2 pt-[2px] font-['Liberation_Mono',monospace] text-[15px] text-black">
    {children}
  </div>
)

const headCell = 'border-r border-[#e2e2e2] pl-[6px] text-left font-normal'

const ParameterPanel = () => (
  <section className="relative flex min-w-0 flex-[1088] flex-col">
    <PanelTitle>
      Parameter List
      <button type="button" aria-label="Close parameter list">
        <CrossIcon />
      </button>
    </PanelTitle>
    <div className="flex-1 border border-[#8a8f9a] bg-white">
      <table className="w-full table-fixed border-collapse text-[#555]">
        <colgroup>
          <col className="w-[35px]" />
          <col className="w-[263px]" />
          <col className="w-[263px]" />
          <col className="w-[261px]" />
          <col />
        </colgroup>
        <thead>
          <tr className="h-[35px]">
            <th className="border-r border-[#e2e2e2]" aria-label="Filter">
              <svg width="22" height="24" viewBox="0 0 22 24" fill="none" className="mx-auto" aria-hidden="true">
                <path d="M1 2h20l-7 9v8l-5 4V11z" fill="#dedede" stroke="#888" strokeWidth="1.6" />
              </svg>
            </th>
            <th className={headCell}>Name</th>
            <th className={headCell}>Expression</th>
            <th className={headCell}>Value</th>
            <th className={headCell}>Description</th>
          </tr>
        </thead>
        <tbody>
          {parameters.map(([name, expression, value, description]) => (
            <tr key={name} className="h-[30px] border-b border-[#e0e0e0] leading-[22px]">
              <td className="bg-[#dedede]">
                <PinIcon />
              </td>
              <td className="pb-[6px] pl-[6px]">
                <div className="flex justify-between">
                  {name}
                  <span className="text-[#b5b5b5]">=</span>
                </div>
              </td>
              <td className="pb-[6px] pl-[6px]">{expression}</td>
              <td className="pb-[6px] pl-[6px] text-[#a5a5a5]">{value}</td>
              <td className="pb-[6px] pl-[5px] whitespace-nowrap">{description}</td>
            </tr>
          ))}
          <tr className="h-[30px] border-b border-[#e0e0e0] leading-[22px]">
            <td />
            <td className="pt-1 pl-[56px] whitespace-nowrap text-[#c2c2c2]">&lt;new parameter&gt;</td>
            <td colSpan={3} />
          </tr>
        </tbody>
      </table>
    </div>
    <div className="flex h-[30px] font-['Liberation_Mono',monospace] text-[15px] text-[#555]">
      <button
        type="button"
        className="w-[162px] border-r border-b-3 border-r-[#9d9d9d] border-b-[#005686] bg-white pt-[7px]"
      >
        Parameter List
      </button>
      <button type="button" className="w-[179px] pt-[2px] font-bold">
        Result Navigator
      </button>
      <span className="mt-[6px] h-5 w-px bg-[#888]" />
    </div>
    {/* Annotation frame */}
    <div className="pointer-events-none absolute -top-1 right-[6px] bottom-[45px] -left-[17px] border-[5px] border-[#ed1c24]" />
    <span className="pointer-events-none absolute top-[152px] left-[328px] text-[44px] leading-[60px] font-bold text-[#ed1c24]">
      11
    </span>
  </section>
)

const ProgressPanel = () => (
  <section className="flex min-w-0 flex-[1048] flex-col">
    <PanelTitle>Progress</PanelTitle>
    <div className="flex-1 border border-r-0 border-[#a0a0a0] bg-white pt-[3px] pl-4">
      <div className="flex h-[26px] items-center">
        <span className="h-4 w-[17px] self-start border-b-2 border-l-2 border-dotted border-[#b5b5b5]" />
        <CstLogo />
        <span className="ml-[3px] font-bold text-[#444]">Untitled_0</span>
      </div>
    </div>
    <div className="flex h-[30px] font-['Liberation_Mono',monospace] text-[15px] text-[#555]">
      <span className="mt-[6px] h-5 w-px bg-[#888]" />
      <button type="button" className="w-[107px] pt-[2px] font-bold">
        Messages
      </button>
      <button
        type="button"
        className="w-[109px] border-x border-b-3 border-x-[#9d9d9d] border-b-[#005686] bg-white pt-[7px]"
      >
        Progress
      </button>
    </div>
  </section>
)

/* ---------- Status bar ---------- */

const statusTools: [string, ReactNode][] = [
  [
    'Zoom window',
    <Svg>
      <path d="M1 1h14M1 1v14" stroke="#d2732b" strokeWidth="1.6" strokeDasharray="2 2" />
      <circle cx="12" cy="11" r="7.5" fill="#fff" stroke="#777" strokeWidth="2" />
      <path d="M8 11h8M12 7v8" stroke="#c45a10" strokeWidth="2" />
      <path d="m17 17 6 6" stroke="#444" strokeWidth="3.5" />
    </Svg>,
  ],
  [
    'Pan',
    <Svg>
      <path d="M12 4v16M4 12h16" stroke="#e08a1a" strokeWidth="2.5" />
      <path d="m12 0 4 5H8zM12 24l4-5H8zM0 12l5-4v8zM24 12l-5-4v8z" fill="#e08a1a" />
    </Svg>,
  ],
  [
    'Rotate',
    <Svg>
      <circle cx="12" cy="12" r="10" fill="#6f6f6f" />
      <path d="M3 7c4-5 13-6 18-1l-9 3z" fill="#a5a5a5" />
      <path d="M0 14c1-5 9-6 16-5V5l8 2-3 11-3-4c-6 6-17 6-18 0z" fill="#e08a1a" stroke="#a85208" />
      <path d="M5 14c4-2 8-1 11-1" stroke="#fff" strokeWidth="1.5" />
    </Svg>,
  ],
  [
    'Zoom',
    <Svg>
      <circle cx="10" cy="9" r="8" fill="#fff" stroke="#777" strokeWidth="2" />
      <path d="m10 2 5 6H5zM10 16l5-6H5z" fill="#d26a18" />
      <path d="m16 16 7 7" stroke="#444" strokeWidth="4" />
    </Svg>,
  ],
  [
    'Spin',
    <Svg>
      <path d="M4 7c-4 8 2 15 8 15s12-7 7-14" stroke="#e08a1a" strokeWidth="4" />
      <path d="M13 3 22 1v9z" fill="#e08a1a" />
      <circle cx="12" cy="13" r="5" fill="#777" />
    </Svg>,
  ],
]

const viewTools: [string, ReactNode][] = [
  [
    'Fit view',
    <Svg>
      <rect x="1" y="1" width="22" height="22" fill="#fff" stroke="#8a8a8a" strokeWidth="1.5" />
      <path d="m5 5 5 5M19 5l-5 5M5 19l5-5M19 19l-5-5" stroke="#d26a18" strokeWidth="2" />
      <path d="M4 4h5L4 9zM20 4h-5l5 5zM4 20h5l-5-5zM20 20h-5l5-5z" fill="#d26a18" />
    </Svg>,
  ],
  [
    'Pick',
    <Svg>
      <path d="M4 9 17 7v12L4 22z" fill="#c9702c" stroke="#8a4a18" />
      <path d="m14 10 9-9" stroke="#333" strokeWidth="4" />
      <path d="M4 9 0 22l4-1z" fill="#555" />
    </Svg>,
  ],
]

const StatusBar = () => (
  <footer className="relative flex h-[37px] shrink-0 items-center overflow-hidden pt-[3px] text-[#555]">
    <span className="flex-1 pl-2">Ready</span>
    <div className="mr-[2px] flex h-8 shrink-0 items-center whitespace-nowrap">
      {statusTools.map(([label, icon], i) => (
        <button
          key={label}
          type="button"
          aria-label={label}
          className={`flex h-8 w-[33px] items-center justify-center ${i === 0 ? 'bg-[#c8c8c8]' : ''}`}
        >
          {icon}
        </button>
      ))}
      <span className="mx-1 h-6 w-px bg-[#cfcfcf]" />
      {viewTools.map(([label, icon]) => (
        <button key={label} type="button" aria-label={label} className="flex h-8 w-[33px] items-center justify-center">
          {icon}
        </button>
      ))}
      <button type="button" aria-label="View options" className="ml-3 flex h-8 items-center">
        <Svg>
          <path d="m1 7 6-6h16l-6 6z" fill="#f6d9bd" stroke="#99562a" />
          <path d="M1 7h16v16H1z" fill="url(#gCopper)" stroke="#99562a" />
          <path d="m17 7 6-6v15l-6 7z" fill="#c98350" stroke="#99562a" />
        </Svg>
        <Caret className="mt-4" />
      </button>
      <span className="mx-[10px] h-6 w-px bg-[#cfcfcf]" />
      <button type="button" aria-label="Add plot" className="mr-5">
        <Svg>
          <rect x="1" y="3" width="22" height="20" fill="#f3f3f3" stroke="#888" />
          <path d="M4 5v14M4 14h14" stroke="#222" strokeWidth="1.5" />
          <path d="M4 15c3-9 5 4 8-2l3-3" stroke="#c8352e" strokeWidth="1.6" />
          <path d="M12 16h4M18 16h4M12 20h4M18 20h4" stroke="#999" />
          <circle cx="17" cy="6" r="6" fill="#3da83f" />
          <path d="M13 6h8M17 2v8" stroke="#fff" strokeWidth="2" />
        </Svg>
      </button>
      <span>Raster=1.000</span>
      <span className="mx-[14px] h-6 w-px bg-[#444]" />
      <span>Surfaces</span>
      <span className="mx-[14px] h-6 w-px bg-[#444]" />
      <span>Normal</span>
      <span className="mx-[14px] h-6 w-px bg-[#444]" />
      <span>cm&nbsp; GHz&nbsp; ns</span>
    </div>
    <span className="absolute right-[14px] bottom-[2px] text-[17px] text-white/80 [text-shadow:1px_1px_1px_#666]">
      CSDN @帅王小剑j
    </span>
  </footer>
)

export default function App() {
  return (
    <div className="flex min-h-screen overflow-hidden bg-[#f0f0f0] font-['Open_Sans','Noto_Sans_CJK_SC',sans-serif] text-[18px]">
      <Gradients />
      {/* Edge of the window behind */}
      <div className="flex w-[5px] shrink-0 flex-col border-r border-[#b4b4b4] bg-white" aria-hidden="true">
        <div className="h-[81px] bg-[#005686]" />
        <div className="h-[214px] bg-[#f0f0f0]" />
        <div className="h-[82px] bg-[#005686]" />
        <div className="h-[200px] bg-[#f0f0f0]" />
      </div>
      <div className="flex min-w-0 flex-1 flex-col">
        <TitleBar />
        <Ribbon />
        <div className="flex flex-1 pt-[2px]">
          <NavigationTree />
          <div className="ml-[6px] flex min-w-0 flex-1 flex-col">
            <Viewport />
            <div className="mt-[6px] flex h-[299px] gap-[6px]">
              <ParameterPanel />
              <ProgressPanel />
            </div>
          </div>
        </div>
        <StatusBar />
        <div className="flex h-1 shrink-0 bg-[#cfe4ec]">
          <div className="ml-[71px] w-[516px] border-x border-t-2 border-[#c4c4c4] bg-white" />
        </div>
      </div>
    </div>
  )
}
